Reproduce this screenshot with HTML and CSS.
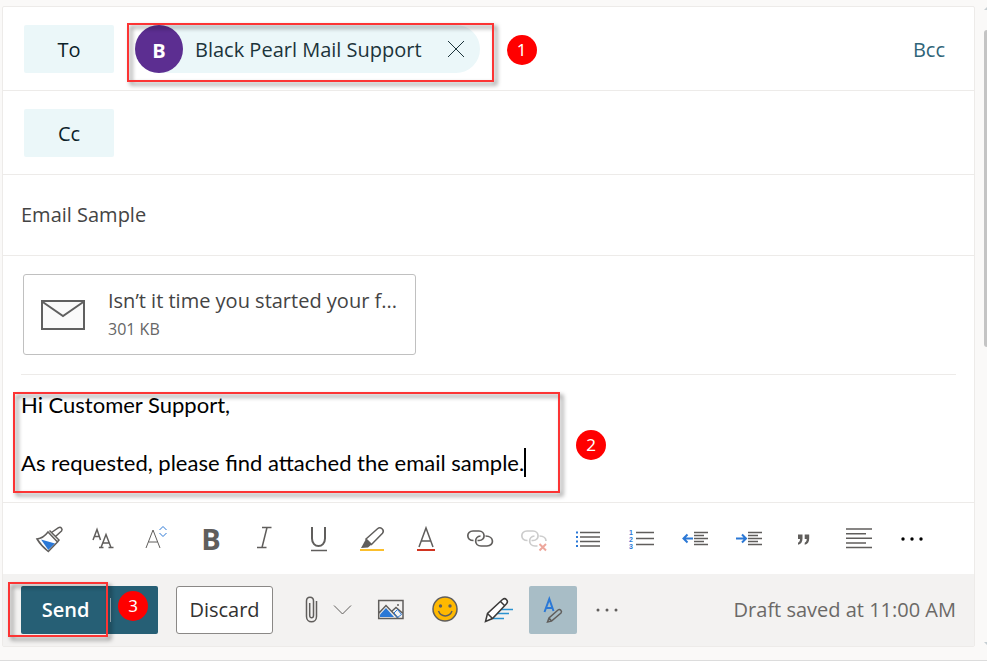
FILE: index.html
```
<!DOCTYPE html>
<html lang="en">
<head>
    <meta charset="UTF-8">
    <meta name="viewport" content="width=device-width, initial-scale=1">
    <title>Email Sample</title>
    <link rel="stylesheet" href="styles.css">
</head>
<body>
    <main class="compose">
        <section class="row">
            <button class="pick">To</button>
            <div class="marked recipient">
                <span class="avatar">B</span>
                <span class="name">Black Pearl Mail Support</span>
                <button class="remove" aria-label="Remove">
                    <svg width="18" height="18" viewBox="0 0 18 18"><path d="M1 1L17 17M17 1L1 17"/></svg>
                </button>
                <span class="frame frame-to"></span>
                <span class="badge badge-to">1</span>
            </div>
            <button class="bcc">Bcc</button>
        </section>
        <section class="row">
            <button class="pick">Cc</button>
        </section>
        <section class="row subject-row">
            <input class="subject" type="text" value="Email Sample" aria-label="Subject">
        </section>
        <section class="attachments">
            <article class="file">
                <svg class="envelope" width="44" height="30" viewBox="0 0 44 30"><path class="paper" d="M1 1H43V29H1Z"/><path d="M1 1.5L22 16L43 1.5"/></svg>
                <div class="file-text">
                    <p class="file-name">Isn’t it time you started your f...</p>
                    <p class="file-size">301 KB</p>
                </div>
            </article>
        </section>
        <section class="editor">
            <div class="marked message">
                <div contenteditable="true" role="textbox" aria-label="Message body" spellcheck="false">
                    <p>Hi Customer Support,</p>
                    <p><br></p>
                    <p>As requested, please find attached the email sample.<span class="caret"></span></p>
                </div>
                <span class="frame frame-message"></span>
                <span class="badge badge-message">2</span>
            </div>
        </section>
        <section class="format-bar">
            <button aria-label="Format painter">
                <svg viewBox="0 0 30 30"><path class="blue-fill" d="M7 15.500L21 19.500L14.300 26Z"/><path class="thick" d="M3 15C8 14.500 11 12 14 8L23.500 18L14.300 27.500C10 24 6 20 3 15ZM15.500 6.500L25 16L23 18.500M17.500 8.500L24.500 3.700C27 2.500 29 5 27.500 7L21.500 12.500"/></svg>
            </button>
            <button aria-label="Font">
                <svg viewBox="0 0 30 30"><path class="thick" d="M5 16L9 5.500L12.500 16M6.500 12.500H11M13 23.500L18 10.500L23 23.500M15 19H21.500M11 23.500H15.500M20.500 23.500H25.500"/></svg>
            </button>
            <button aria-label="Font size">
                <svg viewBox="0 0 30 30"><path d="M4 24L11 6L18 24M6.500 18H15.500"/><path class="blue" d="M17.500 6L21 2.500L24.500 6M17.500 9L21 12.500L24.500 9"/></svg>
            </button>
            <button class="bold" aria-label="Bold">B</button>
            <button aria-label="Italic">
                <svg viewBox="0 0 30 30"><path class="thick" d="M12 3.500H21.500M17 3.500L12 23.500M7 23.500H16.500"/></svg>
            </button>
            <button aria-label="Underline">
                <svg viewBox="0 0 30 30"><path class="heavy" d="M8 3V14.500C8 24.500 21 24.500 21 14.500V3"/><path class="thick" d="M7 26.500H23"/></svg>
            </button>
            <button aria-label="Highlight">
                <svg viewBox="0 0 30 30"><path class="grey-fill" d="M3 24L8 15L13.500 20.500L10 23.500Z"/><path class="thick" d="M8 15L19.500 4.700C22.500 2 27 6 24.500 9.200L13.500 20.500Z"/><path class="yellow" d="M2 26H26"/></svg>
            </button>
            <button aria-label="Font color">
                <svg viewBox="0 0 30 30"><path class="thick" d="M7 23L14 4L21 23M9.500 17H18.500"/><path class="red" d="M5 26H23"/></svg>
            </button>
            <button aria-label="Insert link">
                <svg viewBox="0 0 30 30"><path class="link" d="M7.500 16.500C0 16.500 0 7 7 7H13C19.500 7 20 16.500 13 16.500H11.500M19.500 12C28.500 12 28.500 22 21 22H15C8 22 8 12.500 14.500 12"/></svg>
            </button>
            <button aria-label="Remove link" disabled>
                <svg viewBox="0 0 30 30"><path class="link faded" d="M7.500 16.500C0 16.500 0 7 7 7H13C19.500 7 20 16.500 13 16.500H11.500M19.500 12C24 12 26 14.500 26 17M17.500 22H15C8 22 8 12.500 14.500 12"/><path class="red-faded" d="M19.500 20L26 26.500M26 20L19.500 26.500"/></svg>
            </button>
            <button aria-label="Bullets">
                <svg viewBox="0 0 30 30"><path class="thick" d="M6 8.500H26M6 13H26M6 17.500H26M6 22H26"/><path class="blue dots" d="M2 8.500H4M2 13H4M2 17.500H4M2 22H4"/></svg>
            </button>
            <button aria-label="Numbering">
                <svg viewBox="0 0 30 30"><path class="thick" d="M8 8.500H26M8 14.500H26M8 20.500H26"/><g class="digits"><text x="1" y="11">1</text><text x="1" y="18">2</text><text x="1" y="25">3</text></g></svg>
            </button>
            <button aria-label="Decrease indent">
                <svg viewBox="0 0 30 30"><path class="thick" d="M12 8.500H26M12 11.500H22M12 14.500H26M12 17.500H22M12 20.500H26"/><path class="blue heavy" d="M11 14.500H1.500M5.500 10.500L1.500 14.500L5.500 18.500"/></svg>
            </button>
            <button aria-label="Increase indent">
                <svg viewBox="0 0 30 30"><path class="thick" d="M12 8.500H26M12 11.500H22M12 14.500H26M12 17.500H22M12 20.500H26"/><path class="blue heavy" d="M0 14.500H10M6 10.500L10 14.500L6 18.500"/></svg>
            </button>
            <button aria-label="Quote">
                <svg viewBox="0 0 30 30"><path class="grey-fill" d="M8 10.500H12.500V14.500C12.500 18 11 20 8 20.700V18.700C9.500 18 10 17 10 15H8ZM14.700 10.500H19.200V14.500C19.200 18 17.700 20 14.700 20.700V18.700C16.200 18 16.700 17 16.700 15H14.700Z"/></svg>
            </button>
            <button aria-label="Align left">
                <svg viewBox="0 0 30 30"><path class="thick" d="M2 5H28M2 9.700H22M2 14.300H28M2 19H22M2 23.500H28"/></svg>
            </button>
            <button aria-label="More formatting options">
                <svg viewBox="0 0 30 30"><g class="black-fill"><circle cx="5" cy="15" r="1.700"/><circle cx="14" cy="15" r="1.700"/><circle cx="23" cy="15" r="1.700"/></g></svg>
            </button>
        </section>
        <footer class="send-bar">
            <div class="marked send-group">
                <button class="send">Send</button>
                <button class="send-more" aria-label="More send options"></button>
                <span class="frame frame-send"></span>
                <span class="badge badge-send">3</span>
            </div>
            <button class="discard">Discard</button>
            <div class="attach">
                <button aria-label="Attach">
                    <svg viewBox="0 0 30 30"><path class="thick" d="M19.500 6V21.500C19.500 28.500 9.500 28.500 9.500 21.500V6C9.500 1 16.500 1 16.500 6V20.500C16.500 23.500 12.700 23.500 12.700 20.500V8"/></svg>
                </button>
                <button aria-label="Attach options">
                    <svg viewBox="0 0 30 30"><path d="M7 10.500L15.500 19L24 10.500"/></svg>
                </button>
            </div>
            <div class="tools">
                <button aria-label="Insert picture">
                    <svg viewBox="0 0 30 30"><path class="blue-fill" d="M4 22V19.500L10 13L18 22Z"/><path class="thick" d="M2.700 5.500H27V23.500H2.700ZM3 18L10 10.500L22 23M15.500 16.500L20 12.500L27 18.500"/><path class="blue" d="M18 18L21.500 14.500L25.500 19.500L21.500 22.500Z"/><circle class="grey-fill" cx="22" cy="10" r="1"/></svg>
                </button>
                <button aria-label="Insert emoji">
                    <svg viewBox="0 0 30 30"><circle class="face" cx="15" cy="14" r="12"/><circle class="grey-fill" cx="10.500" cy="11" r="1.700"/><circle class="grey-fill" cx="20" cy="11" r="1.700"/><path class="thick" d="M8.500 16C11 22.500 19.500 22.500 22 16"/></svg>
                </button>
                <button aria-label="Insert signature">
                    <svg viewBox="0 0 30 30"><path class="sky" d="M17 14.500H29M13 18.500H25M9 23.500H20"/><path class="pen" d="M1.500 26.500L3.500 18.500L18.500 4.500C21.500 2 25 6 22.500 8.700L8.500 23.500ZM3.500 18.500L8.500 23.500M16.500 6.500L21 11"/></svg>
                </button>
                <button class="active" aria-label="Show formatting options" aria-pressed="true">
                    <svg viewBox="0 0 30 30"><path class="blue heavy" d="M6.500 17L11.300 4L15.500 16M8.500 13H14"/><path class="thick" d="M9.500 27L11 23L20 15C22 13.500 24.500 16 23 18L13.500 26ZM11 23L13.500 26"/></svg>
                </button>
                <button aria-label="More options">
                    <svg viewBox="0 0 30 30"><g class="grey-fill"><circle cx="6" cy="15" r="1.500"/><circle cx="15" cy="15" r="1.500"/><circle cx="24" cy="15" r="1.500"/></g></svg>
                </button>
            </div>
            <p class="status">Draft saved at 11:00 AM</p>
        </footer>
    </main>
    <aside class="scroll">
        <span class="arrow up"></span>
        <span class="thumb"></span>
        <span class="arrow down"></span>
    </aside>
</body>
</html>
```
FILE: styles.css
```
* {
    box-sizing: border-box;
}

body {
    display: flex;
    min-height: 100vh;
    margin: 0;
    background-color: #faf9f8;
    border-bottom: 1px solid #dcdcdc;
    color: #323130;
    font-family: "Open Sans", "Noto Sans", sans-serif;
    font-size: 20px;
    line-height: 28px;
}

p {
    margin: 0;
}

button {
    display: flex;
    align-items: center;
    justify-content: center;
    padding: 0;
    border: none;
    background: none;
    font: inherit;
    color: inherit;
    cursor: pointer;
}

.compose {
    display: flex;
    flex-direction: column;
    flex: 1;
    min-width: 0;
    margin: 6px 9px 13px 2px;
    background-color: #fff;
    border: 1px solid #edebe9;
    border-radius: 2px;
}

.row {
    display: flex;
    align-items: center;
    gap: 21px;
    height: 84px;
    padding: 0 29px 0 21px;
    border-bottom: 1px solid #edebe9;
}

.pick {
    width: 90px;
    height: 48px;
    padding-top: 2px;
    background-color: #ebf7f9;
    border-radius: 2px;
    color: #0b2229;
    font-weight: 500;
}

/* anything a red frame and number are drawn over */
.marked {
    position: relative;
}

.recipient {
    display: flex;
    align-items: center;
    height: 48px;
    background-color: #ebf7f9;
    border-radius: 24px;
    color: #1c343b;
}

.avatar {
    width: 48px;
    height: 48px;
    padding-top: 2px;
    border-radius: 50%;
    background-color: #5c2e91;
    color: #fff;
    font-weight: 700;
    line-height: 48px;
    text-align: center;
}

.name {
    padding: 2px 10px 0 12px;
}

.remove {
    width: 48px;
    height: 48px;
}

.bcc {
    margin-left: auto;
    padding-top: 2px;
    color: #2f6478;
}

.subject-row {
    height: 81px;
    padding: 0 18px;
}

.subject {
    width: 100%;
    padding: 0;
    border: none;
    outline: none;
    background: none;
    font: inherit;
    color: #444;
}

.attachments {
    margin: 0 18px;
    padding: 18px 2px 19px;
    border-bottom: 1px solid #edebe9;
}

.file {
    display: flex;
    align-items: center;
    gap: 23px;
    width: 393px;
    max-width: 100%;
    height: 81px;
    padding: 0 17px;
    border: 1px solid #c0c0c0;
    border-radius: 3px;
}

.file-name {
    color: #444;
    line-height: 28px;
}

.file-size {
    color: #666;
    font-size: 16px;
    line-height: 28px;
}

.editor {
    flex: 1;
    padding: 15px 18px 22px;
    color: #000;
    font-family: Lato, "Open Sans", sans-serif;
    font-size: 22px;
    line-height: 29px;
}

.message {
    width: fit-content;
}

.message div {
    outline: none;
}

.caret {
    display: inline-block;
    width: 2px;
    height: 29px;
    background-color: #000;
    vertical-align: top;
}

.format-bar {
    display: flex;
    height: 72px;
    padding: 0 19px;
    border-top: 1px solid #edebe9;
}

.format-bar button {
    width: 54px;
}

.format-bar .bold {
    color: #605e5c;
    font-size: 29px;
    font-weight: 700;
}

svg {
    flex: none;
    fill: none;
    stroke: #605e5c;
    stroke-width: 1;
}

.format-bar svg,
.send-bar svg {
    width: 30px;
    height: 30px;
}

.envelope {
    stroke: #606060;
    stroke-width: 2;
}

.paper {
    fill: #fafafa;
}

.remove svg {
    stroke: #1c343b;
}

.thick {
    stroke-width: 1.5;
}

.heavy {
    stroke-width: 2;
}

.link {
    stroke-width: 1.7;
}

.blue {
    stroke: #2b78d6;
}

.dots {
    stroke-width: 2;
}

.sky {
    stroke: #2a92d0;
    stroke-width: 1.5;
}

.yellow {
    stroke: #fbbf2d;
    stroke-width: 2;
}

.red {
    stroke: #d13420;
    stroke-width: 2;
}

.faded {
    stroke: #ccc;
}

.red-faded {
    stroke: #eda79c;
    stroke-width: 2;
}

.pen {
    fill: #fff;
    stroke: #3b3a39;
    stroke-width: 1.5;
}

.face {
    fill: #ffb900;
    stroke: #605e5c;
    stroke-width: 1.5;
}

.blue-fill {
    fill: #2b78d6;
    stroke: none;
}

.grey-fill {
    fill: #605e5c;
    stroke: none;
}

.black-fill {
    fill: #000;
    stroke: none;
}

.digits {
    fill: #2b78d6;
    stroke: none;
    font-family: "Liberation Sans", sans-serif;
    font-size: 7px;
    font-weight: 700;
}

.send-bar {
    display: flex;
    align-items: center;
    height: 72px;
    padding: 0 18px;
    background-color: #f3f2f1;
}

.send-group {
    display: flex;
    height: 48px;
    background-color: #265f75;
    border-radius: 2px;
    color: #fff;
}

.send {
    width: 89px;
    font-weight: 600;
}

.send-more {
    width: 48px;
    height: 24px;
    margin: 12px 0;
    border-left: 1px solid #a8bfc8;
}

.discard {
    width: 97px;
    height: 48px;
    margin-left: 18px;
    background-color: #fff;
    border: 1px solid #8a8886;
    border-radius: 3px;
    font-weight: 500;
}

.attach {
    display: flex;
    margin: 0 10px 0 24px;
}

.tools {
    display: flex;
    gap: 6px;
}

.tools button {
    width: 48px;
    height: 48px;
    border-radius: 2px;
}

.tools .active {
    background-color: #a8bdc6;
}

.status {
    margin-left: auto;
    color: #6b6967;
    white-space: nowrap;
}

.frame {
    position: absolute;
    border: 2px solid #fc3434;
    filter: drop-shadow(3px 3px 2px rgba(0, 0, 0, 0.5));
    pointer-events: none;
}

.frame-to {
    inset: -2px -14px -9px -8px;
}

.frame-message {
    inset: 2px -34px -16px -8px;
}

.frame-send {
    inset: -4px 50px -3px -13px;
}

.badge {
    position: absolute;
    width: 30px;
    height: 30px;
    border-radius: 50%;
    background-color: #f00;
    color: #fff;
    font-family: "Noto Sans", sans-serif;
    font-size: 17px;
    line-height: 30px;
    text-align: center;
}

.badge-to {
    top: 10px;
    right: -57px;
}

.badge-message {
    top: 40px;
    right: -80px;
}

.badge-send {
    top: 5px;
    right: 10px;
}

.scroll {
    display: flex;
    flex-direction: column;
    width: 3px;
    overflow: hidden;
}

.arrow {
    width: 12px;
    border: 6px solid transparent;
}

.up {
    border-top: none;
    border-bottom-color: #c5ced2;
    margin-top: 4px;
}

.thumb {
    height: 48%;
    margin-top: 20px;
    background-color: #c4c4c4;
    border-radius: 4px 0 0 4px;
}

.down {
    border-bottom: none;
    border-top-color: #c5ced2;
    margin: auto 0 12px;
}
```
